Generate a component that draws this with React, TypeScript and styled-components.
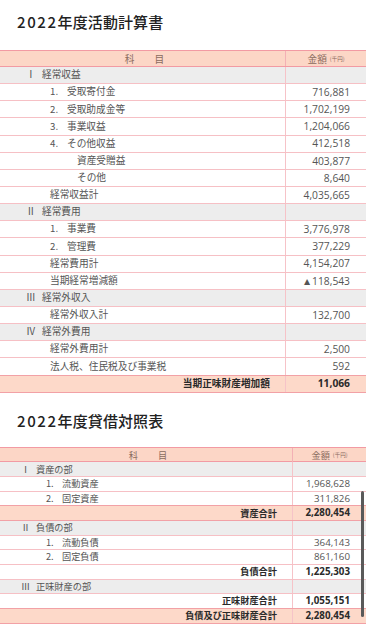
import React from "react";
import styled, { createGlobalStyle } from "styled-components";

const Global = createGlobalStyle`
  html, body { margin: 0; padding: 0; background: #fff; }
  body { font-family: "Noto Sans CJK JP", "Noto Sans", sans-serif; color: #555; overflow: hidden; }
`;

type Kind = "section" | "item" | "subsub" | "sum" | "total" | "boldsum";
type Row = { kind: Kind; num?: string; label: string; amount?: string };

const table1: Row[] = [
  { kind: "section", num: "Ⅰ", label: "経常収益" },
  { kind: "item", num: "1.", label: "受取寄付金", amount: "716,881" },
  { kind: "item", num: "2.", label: "受取助成金等", amount: "1,702,199" },
  { kind: "item", num: "3.", label: "事業収益", amount: "1,204,066" },
  { kind: "item", num: "4.", label: "その他収益", amount: "412,518" },
  { kind: "subsub", label: "資産受贈益", amount: "403,877" },
  { kind: "subsub", label: "その他", amount: "8,640" },
  { kind: "sum", label: "経常収益計", amount: "4,035,665" },
  { kind: "section", num: "Ⅱ", label: "経常費用" },
  { kind: "item", num: "1.", label: "事業費", amount: "3,776,978" },
  { kind: "item", num: "2.", label: "管理費", amount: "377,229" },
  { kind: "sum", label: "経常費用計", amount: "4,154,207" },
  { kind: "sum", label: "当期経常増減額", amount: "▲118,543" },
  { kind: "section", num: "Ⅲ", label: "経常外収入" },
  { kind: "sum", label: "経常外収入計", amount: "132,700" },
  { kind: "section", num: "Ⅳ", label: "経常外費用" },
  { kind: "sum", label: "経常外費用計", amount: "2,500" },
  { kind: "sum", label: "法人税、住民税及び事業税", amount: "592" },
  { kind: "total", label: "当期正味財産増加額", amount: "11,066" },
];

const table2: Row[] = [
  { kind: "section", num: "Ⅰ", label: "資産の部" },
  { kind: "item", num: "1.", label: "流動資産", amount: "1,968,628" },
  { kind: "item", num: "2.", label: "固定資産", amount: "311,826" },
  { kind: "total", label: "資産合計", amount: "2,280,454" },
  { kind: "section", num: "Ⅱ", label: "負債の部" },
  { kind: "item", num: "1.", label: "流動負債", amount: "364,143" },
  { kind: "item", num: "2.", label: "固定負債", amount: "861,160" },
  { kind: "boldsum", label: "負債合計", amount: "1,225,303" },
  { kind: "section", num: "Ⅲ", label: "正味財産の部" },
  { kind: "boldsum", label: "正味財産合計", amount: "1,055,151" },
  { kind: "total", label: "負債及び正味財産合計", amount: "2,280,454" },
];

type Dims = {
  rowH: number;
  headH: number;
  split: number;
  font: number;
  secNum: number;
  secLabel: number;
  itemNum: number;
  itemLabel: number;
  subsub: number;
  sum: number;
};

const dims1: Dims = { rowH: 17.15, headH: 17, split: 286, font: 9.7, secNum: 26, secLabel: 42, itemNum: 50, itemLabel: 67, subsub: 77, sum: 50 };
const dims2: Dims = { rowH: 14.67, headH: 15.67, split: 293, font: 9.2, secNum: 21, secLabel: 36, itemNum: 46, itemLabel: 62, subsub: 72, sum: 46 };

const Page = styled.div`
  display: flex;
  flex-direction: column;
`;

const Title = styled.h2<{ $top: number; $bottom: number }>`
  margin: 0;
  padding: ${(p) => p.$top}px 0 ${(p) => p.$bottom}px 17px;
  height: 16px;
  box-sizing: content-box;
  font-size: 15px;
  line-height: 16px;
  font-weight: 500;
  color: #222;
  letter-spacing: 0.1px;
  span { letter-spacing: 1.6px; }
`;

const Table = styled.div`
  display: flex;
  flex-direction: column;
  width: 366px;
`;

const RowBox = styled.div<{ $h: number; $split: number; $bg: string; $line: string; $font: number }>`
  display: grid;
  grid-template-columns: ${(p) => p.$split}px 1fr;
  height: ${(p) => p.$h}px;
  box-sizing: border-box;
  background: ${(p) => p.$bg};
  border-bottom: 1px solid ${(p) => p.$line};
  font-size: ${(p) => p.$font}px;
`;

const HeaderRow = styled(RowBox)`
  border-top: 1px solid #f29aa3;
`;

const LabelCell = styled.div<{ $pad: number; $align: string; $bold: boolean }>`
  display: flex;
  align-items: center;
  justify-content: ${(p) => p.$align};
  padding-left: ${(p) => p.$pad}px;
  padding-right: 15px;
  border-right: 1px solid #f6c3c8;
  color: ${(p) => (p.$bold ? "#2a2a2a" : "#555")};
  font-weight: ${(p) => (p.$bold ? 700 : 400)};
  white-space: nowrap;
  line-height: 1;
`;

const AmountCell = styled.div<{ $bold: boolean }>`
  display: flex;
  align-items: center;
  justify-content: flex-end;
  padding-right: 16px;
  font-family: "Open Sans", "Noto Sans", sans-serif;
  font-size: 1.06em;
  color: ${(p) => (p.$bold ? "#2a2a2a" : "#555")};
  font-weight: ${(p) => (p.$bold ? 700 : 400)};
  line-height: 1;
`;

const Num = styled.span<{ $w: number }>`
  display: inline-block;
  width: ${(p) => p.$w}px;
`;

const HeadLabel = styled.div`
  display: flex;
  align-items: center;
  justify-content: center;
  gap: 20px;
  color: #8a6b5e;
  border-right: 1px solid #f3b0b5;
  padding-left: 4px;
`;

const HeadAmount = styled.div`
  display: flex;
  align-items: center;
  justify-content: center;
  color: #8a6b5e;
  gap: 3px;
  small { font-size: 5.5px; }
`;

const Scrollbar = styled.div`
  position: fixed;
  right: 2px;
  top: 491px;
  width: 3px;
  height: 126px;
  border-radius: 2px;
  background: #5a5a5a;
`;

function DataTable({ rows, d }: { rows: Row[]; d: Dims }) {
  return (
    <Table>
      <HeaderRow $h={d.headH} $split={d.split} $bg="#fcd6c6" $line="#f29aa3" $font={d.font}>
        <HeadLabel>
          <span>科</span>
          <span>目</span>
        </HeadLabel>
        <HeadAmount>
          <span>金額</span>
          <small>(千円)</small>
        </HeadAmount>
      </HeaderRow>
      {rows.map((r, i) => {
        const next = rows[i + 1];
        const isTotal = r.kind === "total";
        const bg = r.kind === "section" ? "#ededed" : isTotal ? "#fdd9c9" : "#fff";
        const line = isTotal || (next && next.kind === "total") || i === rows.length - 1 ? "#f2a1a6" : "#f6c0c5";
        const bold = isTotal || r.kind === "boldsum";
        let pad = d.sum;
        let align = "flex-start";
        let content: React.ReactNode = r.label;
        if (r.kind === "section") {
          pad = d.secNum;
          content = (
            <>
              <Num $w={d.secLabel - d.secNum}>{r.num}</Num>
              {r.label}
            </>
          );
        } else if (r.kind === "item") {
          pad = d.itemNum;
          content = (
            <>
              <Num $w={d.itemLabel - d.itemNum}>{r.num}</Num>
              {r.label}
            </>
          );
        } else if (r.kind === "subsub") {
          pad = d.subsub;
        } else if (bold) {
          align = "flex-end";
          pad = 0;
        }
        return (
          <RowBox key={i} $h={d.rowH} $split={d.split} $bg={bg} $line={line} $font={d.font}>
            <LabelCell $pad={pad} $align={align} $bold={bold}>
              {content}
            </LabelCell>
            <AmountCell $bold={bold}>{r.amount ?? ""}</AmountCell>
          </RowBox>
        );
      })}
    </Table>
  );
}

export default function App() {
  return (
    <Page>
      <Global />
      <Title $top={14} $bottom={20}>
        <span>2022</span>年度活動計算書
      </Title>
      <DataTable rows={table1} d={dims1} />
      <Title $top={20} $bottom={18}>
        <span>2022</span>年度貸借対照表
      </Title>
      <DataTable rows={table2} d={dims2} />
      <Scrollbar />
    </Page>
  );
}
